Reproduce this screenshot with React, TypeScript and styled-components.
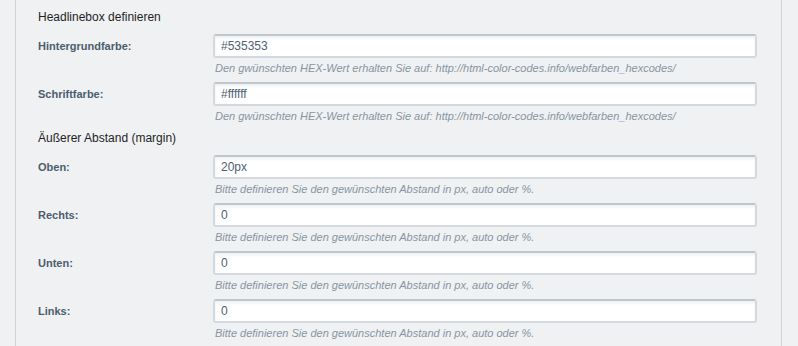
import styled, { createGlobalStyle } from "styled-components";

const GlobalStyle = createGlobalStyle`
  html, body {
    margin: 0;
    padding: 0;
    background: #f0f1f3;
    font-family: "Liberation Sans", Arial, sans-serif;
  }
`;

type Field = { label: string; value: string; help: string };

const colorHelp =
  "Den gwünschten HEX-Wert erhalten Sie auf: http://html-color-codes.info/webfarben_hexcodes/";
const marginHelp =
  "Bitte definieren Sie den gewünschten Abstand in px, auto oder %.";

const sections: { title: string; fields: Field[] }[] = [
  {
    title: "Headlinebox definieren",
    fields: [
      { label: "Hintergrundfarbe:", value: "#535353", help: colorHelp },
      { label: "Schriftfarbe:", value: "#ffffff", help: colorHelp },
    ],
  },
  {
    title: "Äußerer Abstand (margin)",
    fields: [
      { label: "Oben:", value: "20px", help: marginHelp },
      { label: "Rechts:", value: "0", help: marginHelp },
      { label: "Unten:", value: "0", help: marginHelp },
      { label: "Links:", value: "0", help: marginHelp },
    ],
  },
];

const App = () => {
  return (
    <>
      <GlobalStyle />
      <Page>
        <Panel>
          {sections.map((section) => (
            <Section key={section.title}>
              <Heading>{section.title}</Heading>
              {section.fields.map((field) => (
                <Row key={field.label}>
                  <Label>{field.label}</Label>
                  <FieldColumn>
                    <Input defaultValue={field.value} />
                    <Help>{field.help}</Help>
                  </FieldColumn>
                </Row>
              ))}
            </Section>
          ))}
        </Panel>
      </Page>
    </>
  );
};

export default App;

const Page = styled.div`
  width: 798px;
  height: 346px;
  overflow: hidden;
  padding-left: 15px;
  box-sizing: border-box;
`;

const Panel = styled.div`
  width: 767px;
  height: 346px;
  box-sizing: border-box;
  border-left: 1px solid #cdd2d8;
  border-right: 1px solid #cdd2d8;
  padding: 9px 24px 0 21px;
`;

const Section = styled.div`
  display: flex;
  flex-direction: column;
`;

const Heading = styled.div`
  font-size: 12px;
  line-height: 14px;
  color: #1f1f1f;
  padding: 1px 0 10px 1px;
`;

const Row = styled.div`
  display: grid;
  grid-template-columns: 176px 1fr;
  align-items: start;
  padding-bottom: 7px;
`;

const Label = styled.div`
  font-size: 11px;
  font-weight: bold;
  color: #4b5d6d;
  line-height: 24px;
  padding-left: 1px;
`;

const FieldColumn = styled.div`
  display: flex;
  flex-direction: column;
`;

const Input = styled.input`
  height: 24px;
  box-sizing: border-box;
  width: 544px;
  margin: 0;
  border: 2px solid #d4d9df;
  border-top-color: #bfc6ce;
  border-radius: 3px;
  background: #fff;
  box-shadow: inset 0 2px 3px rgba(120, 130, 140, 0.12);
  padding: 0 6px;
  font-family: "Liberation Sans", Arial, sans-serif;
  font-size: 12px;
  color: #4d6273;
  outline: none;
`;

const Help = styled.div`
  margin-top: 3px;
  padding-left: 2px;
  font-size: 11px;
  line-height: 14px;
  font-style: italic;
  color: #8795a2;
  white-space: nowrap;
`;
